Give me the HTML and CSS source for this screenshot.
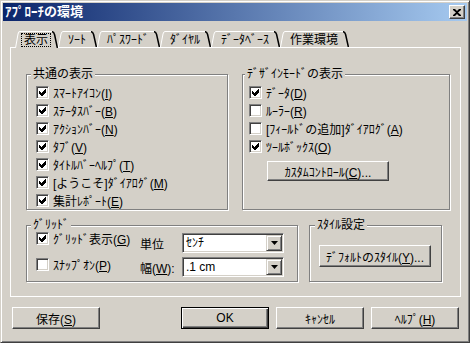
FILE: index.html
```html
<!DOCTYPE html>
<html lang="ja">
<head>
    <meta charset="UTF-8">
    <title>ｱﾌﾟﾛｰﾁの環境</title>
    <link rel="stylesheet" href="styles.css">
</head>
<body>
<div class="window">
    <div class="titlebar">
        <span class="title">ｱﾌﾟﾛｰﾁの環境</span>
        <button class="close-btn" aria-label="閉じる">
            <svg width="8" height="7" viewBox="0 0 8 7"><path d="M0 0h2l2 2 2-2h2v1L5 3.5 8 6v1H6L4 5 2 7H0V6l3-2.5L0 1z"/></svg>
        </button>
    </div>

    <div class="tabs">
        <div class="tab selected">
            <svg class="edge-l" viewBox="0 0 5 16" preserveAspectRatio="none"><path d="M0.5 16 L3 3 Q3.5 0.5 5 0.5"/></svg>
            <span class="tab-label"><span class="focus">表示</span></span>
            <svg class="edge-r" viewBox="0 0 6 16" preserveAspectRatio="none"><path d="M0 0.7 Q1.8 0.7 2.6 3.5 L5.4 16"/></svg>
        </div>
        <div class="tab">
            <svg class="edge-l" viewBox="0 0 5 16" preserveAspectRatio="none"><path d="M0.5 16 L3 3 Q3.5 0.5 5 0.5"/></svg>
            <span class="tab-label">ｿｰﾄ</span>
            <svg class="edge-r" viewBox="0 0 6 16" preserveAspectRatio="none"><path d="M0 0.7 Q1.8 0.7 2.6 3.5 L5.4 16"/></svg>
        </div>
        <div class="tab">
            <svg class="edge-l" viewBox="0 0 5 16" preserveAspectRatio="none"><path d="M0.5 16 L3 3 Q3.5 0.5 5 0.5"/></svg>
            <span class="tab-label">ﾊﾟｽﾜｰﾄﾞ</span>
            <svg class="edge-r" viewBox="0 0 6 16" preserveAspectRatio="none"><path d="M0 0.7 Q1.8 0.7 2.6 3.5 L5.4 16"/></svg>
        </div>
        <div class="tab">
            <svg class="edge-l" viewBox="0 0 5 16" preserveAspectRatio="none"><path d="M0.5 16 L3 3 Q3.5 0.5 5 0.5"/></svg>
            <span class="tab-label">ﾀﾞｲﾔﾙ</span>
            <svg class="edge-r" viewBox="0 0 6 16" preserveAspectRatio="none"><path d="M0 0.7 Q1.8 0.7 2.6 3.5 L5.4 16"/></svg>
        </div>
        <div class="tab">
            <svg class="edge-l" viewBox="0 0 5 16" preserveAspectRatio="none"><path d="M0.5 16 L3 3 Q3.5 0.5 5 0.5"/></svg>
            <span class="tab-label">ﾃﾞｰﾀﾍﾞｰｽ</span>
            <svg class="edge-r" viewBox="0 0 6 16" preserveAspectRatio="none"><path d="M0 0.7 Q1.8 0.7 2.6 3.5 L5.4 16"/></svg>
        </div>
        <div class="tab">
            <svg class="edge-l" viewBox="0 0 5 16" preserveAspectRatio="none"><path d="M0.5 16 L3 3 Q3.5 0.5 5 0.5"/></svg>
            <span class="tab-label">作業環境</span>
            <svg class="edge-r" viewBox="0 0 6 16" preserveAspectRatio="none"><path d="M0 0.7 Q1.8 0.7 2.6 3.5 L5.4 16"/></svg>
        </div>
    </div>

    <div class="panel">
        <div class="row-top">
            <fieldset class="group group-common">
                <legend>共通の表示</legend>
                <div class="checklist">
                    <div class="check"><span class="checkbox on"><svg viewBox="0 0 7 7"><path d="M0 2l2 2 4-4h1v3l-4 4H2L0 5z"/></svg></span><span>ｽﾏｰﾄｱｲｺﾝ<span class="key">(<u>I</u>)</span></span></div>
                    <div class="check"><span class="checkbox on"><svg viewBox="0 0 7 7"><path d="M0 2l2 2 4-4h1v3l-4 4H2L0 5z"/></svg></span><span>ｽﾃｰﾀｽﾊﾞｰ<span class="key">(<u>B</u>)</span></span></div>
                    <div class="check"><span class="checkbox on"><svg viewBox="0 0 7 7"><path d="M0 2l2 2 4-4h1v3l-4 4H2L0 5z"/></svg></span><span>ｱｸｼｮﾝﾊﾞｰ<span class="key">(<u>N</u>)</span></span></div>
                    <div class="check"><span class="checkbox on"><svg viewBox="0 0 7 7"><path d="M0 2l2 2 4-4h1v3l-4 4H2L0 5z"/></svg></span><span>ﾀﾌﾞ<span class="key">(<u>V</u>)</span></span></div>
                    <div class="check"><span class="checkbox on"><svg viewBox="0 0 7 7"><path d="M0 2l2 2 4-4h1v3l-4 4H2L0 5z"/></svg></span><span>ﾀｲﾄﾙﾊﾞｰﾍﾙﾌﾟ<span class="key">(<u>T</u>)</span></span></div>
                    <div class="check"><span class="checkbox on"><svg viewBox="0 0 7 7"><path d="M0 2l2 2 4-4h1v3l-4 4H2L0 5z"/></svg></span><span>[ようこそ]ﾀﾞｲｱﾛｸﾞ<span class="key">(<u>M</u>)</span></span></div>
                    <div class="check"><span class="checkbox on"><svg viewBox="0 0 7 7"><path d="M0 2l2 2 4-4h1v3l-4 4H2L0 5z"/></svg></span><span>集計ﾚﾎﾟｰﾄ<span class="key">(<u>E</u>)</span></span></div>
                </div>
            </fieldset>

            <fieldset class="group group-design">
                <legend>ﾃﾞｻﾞｲﾝﾓｰﾄﾞの表示</legend>
                <div class="checklist">
                    <div class="check"><span class="checkbox on"><svg viewBox="0 0 7 7"><path d="M0 2l2 2 4-4h1v3l-4 4H2L0 5z"/></svg></span><span>ﾃﾞｰﾀ<span class="key">(<u>D</u>)</span></span></div>
                    <div class="check"><span class="checkbox"></span><span>ﾙｰﾗｰ<span class="key">(<u>R</u>)</span></span></div>
                    <div class="check"><span class="checkbox"></span><span>[ﾌｨｰﾙﾄﾞの追加]ﾀﾞｲｱﾛｸﾞ<span class="key">(<u>A</u>)</span></span></div>
                    <div class="check"><span class="checkbox on"><svg viewBox="0 0 7 7"><path d="M0 2l2 2 4-4h1v3l-4 4H2L0 5z"/></svg></span><span>ﾂｰﾙﾎﾞｯｸｽ<span class="key">(<u>O</u>)</span></span></div>
                </div>
                <button class="btn btn-custom">ｶｽﾀﾑｺﾝﾄﾛｰﾙ<span class="key">(<u>C</u>)...</span></button>
            </fieldset>
        </div>

        <div class="row-bottom">
            <fieldset class="group group-grid">
                <legend>ｸﾞﾘｯﾄﾞ</legend>
                <div class="grid-body">
                    <div class="check check-raise"><span class="checkbox on"><svg viewBox="0 0 7 7"><path d="M0 2l2 2 4-4h1v3l-4 4H2L0 5z"/></svg></span><span>ｸﾞﾘｯﾄﾞ表示<span class="key">(<u>G</u>)</span></span></div>
                    <span class="field-label">単位</span>
                    <div class="combo">
                        <span class="combo-value">ｾﾝﾁ</span>
                        <span class="combo-arrow"><svg width="7" height="4" viewBox="0 0 7 4"><path d="M0 0h7L3.5 4z"/></svg></span>
                    </div>
                    <div class="check"><span class="checkbox"></span><span>ｽﾅｯﾌﾟｵﾝ<span class="key">(<u>P</u>)</span></span></div>
                    <span class="field-label">幅<span class="key">(<u>W</u>):</span></span>
                    <div class="combo">
                        <span class="combo-value">.1 cm</span>
                        <span class="combo-arrow"><svg width="7" height="4" viewBox="0 0 7 4"><path d="M0 0h7L3.5 4z"/></svg></span>
                    </div>
                </div>
            </fieldset>

            <fieldset class="group group-style">
                <legend>ｽﾀｲﾙ設定</legend>
                <button class="btn btn-style">ﾃﾞﾌｫﾙﾄのｽﾀｲﾙ<span class="key">(<u>Y</u>)...</span></button>
            </fieldset>
        </div>
    </div>

    <div class="actions">
        <button class="btn btn-save">保存<span class="key">(<u>S</u>)</span></button>
        <button class="btn btn-default">OK</button>
        <button class="btn">ｷｬﾝｾﾙ</button>
        <button class="btn">ﾍﾙﾌﾟ<span class="key">(<u>H</u>)</span></button>
    </div>
</div>
</body>
</html>
```

FILE: styles.css
```css
* {
    box-sizing: border-box;
}

body {
    margin: 0;
    font-family: "Liberation Sans", "Noto Sans CJK JP", sans-serif;
    font-size: 12px;
    color: #000;
    background: #d4d0c8;
    text-autospace: no-autospace;
}

.key {
    font-family: "Liberation Sans", sans-serif;
    text-autospace: no-autospace;
}

.window {
    width: 470px;
    height: 343px;
    padding: 2px;
    background: #d4d0c8;
    border: 1px solid;
    border-color: #d4d0c8 #404040 #404040 #d4d0c8;
    box-shadow: inset 1px 1px 0 #fff, inset -1px -1px 0 #808080;
}

/* title bar */

.titlebar {
    display: flex;
    align-items: center;
    height: 18px;
    padding: 0 2px;
    background: linear-gradient(to right, #0a246a, #a6caf0);
}

.title {
    color: #fff;
    font-size: 13px;
    font-weight: bold;
    line-height: 18px;
}

.close-btn {
    display: flex;
    align-items: center;
    justify-content: center;
    width: 16px;
    height: 14px;
    margin-left: auto;
    padding: 0;
    background: #d4d0c8;
    border: 1px solid;
    border-color: #fff #404040 #404040 #fff;
    box-shadow: inset -1px -1px 0 #808080;
}

/* tabs */

.tabs {
    display: flex;
    align-items: flex-end;
    height: 26px;
    padding-left: 12px;
}

.tab {
    display: flex;
    height: 16px;
}

.tab.selected {
    position: relative;
    height: 17px;
    margin-bottom: -1px;
    background: #d4d0c8;
}

.tab svg {
    height: 100%;
    flex: none;
    fill: none;
}

.edge-l {
    width: 5px;
    stroke: #fff;
    stroke-width: 1;
}

.edge-r {
    width: 6px;
    stroke: #000;
    stroke-width: 1.5;
}

.tab-label {
    border-top: 1px solid #fff;
    padding: 1px 5px 0;
    line-height: 14px;
    white-space: nowrap;
}

.selected .tab-label {
    padding: 1px 1px 0;
}

.focus {
    display: block;
    border: 1px dotted #000;
    padding: 0 2px;
    line-height: 12px;
}

/* panel */

.panel {
    height: 250px;
    margin: 0 6px 0 7px;
    border: 1px solid #fff;
    padding: 19px 0 0 15px;
}

.row-top {
    display: flex;
    gap: 14px;
    height: 143px;
}

.row-bottom {
    display: flex;
    gap: 11px;
    height: 64px;
    margin-top: 8px;
}

.group {
    margin: 0;
    padding: 0;
    min-width: 0;
    border: 1px solid #808080;
    box-shadow: 1px 1px 0 #fff, inset 1px 1px 0 #fff;
}

.group legend {
    margin-left: 4px;
    padding: 0 2px;
    line-height: 14px;
    background: #d4d0c8;
}

.group-common {
    width: 202px;
}

.group-design {
    width: 208px;
}

.group-design legend {
    margin-left: 2px;
}

.group-grid {
    width: 272px;
}

.group-style {
    width: 133px;
}

.group-style legend {
    margin-left: 5px;
}

.checklist {
    padding: 2px 0 0 9px;
}

.group-design .checklist {
    padding-left: 6px;
}

.check {
    display: flex;
    align-items: center;
    gap: 4px;
    height: 18px;
    white-space: nowrap;
}

.checkbox {
    display: flex;
    align-items: center;
    justify-content: center;
    flex: none;
    width: 13px;
    height: 13px;
    background: #fff;
    border: 1px solid;
    border-color: #808080 #fff #fff #808080;
    box-shadow: inset 1px 1px 0 #404040, inset -1px -1px 0 #d4d0c8;
}

.checkbox svg {
    width: 7px;
    height: 7px;
    shape-rendering: crispEdges;
}

/* grid group */

.grid-body {
    display: grid;
    grid-template-columns: 104px 42px 102px;
    grid-template-rows: 20px 20px;
    row-gap: 4px;
    align-items: center;
    padding: 1px 0 0 9px;
}

.grid-body .check {
    align-self: start;
    height: 14px;
}

.grid-body .check-raise {
    margin-top: -2px;
}

.field-label {
    white-space: nowrap;
}

.combo {
    display: flex;
    height: 20px;
    padding: 1px;
    background: #fff;
    border: 1px solid;
    border-color: #808080 #fff #fff #808080;
    box-shadow: inset 1px 1px 0 #404040, inset -1px -1px 0 #d4d0c8;
}

.combo-value {
    flex: 1;
    padding-left: 2px;
    line-height: 16px;
}

.combo-arrow {
    display: flex;
    align-items: center;
    justify-content: center;
    width: 16px;
    height: 16px;
    background: #d4d0c8;
    border: 1px solid;
    border-color: #d4d0c8 #404040 #404040 #d4d0c8;
    box-shadow: inset 1px 1px 0 #fff, inset -1px -1px 0 #808080;
}

/* buttons */

.btn {
    height: 22px;
    padding: 0;
    font: inherit;
    color: #000;
    white-space: nowrap;
    background: #d4d0c8;
    border: 1px solid;
    border-color: #fff #404040 #404040 #fff;
    box-shadow: inset -1px -1px 0 #808080;
}

.btn-default {
    border-color: #000;
    box-shadow: inset 1px 1px 0 #fff, inset -1px -1px 0 #404040, inset -2px -2px 0 #808080;
}

.btn-custom {
    display: block;
    width: 122px;
    height: 20px;
    margin: 6px 0 0 24px;
}

.btn-style {
    display: block;
    width: 112px;
    margin: 13px 0 0 9px;
}

.actions {
    display: flex;
    gap: 7px;
    margin-top: 10px;
    padding: 0 8px 0 9px;
}

.actions .btn {
    width: 88px;
}

.btn-save {
    margin-right: auto;
}
```
